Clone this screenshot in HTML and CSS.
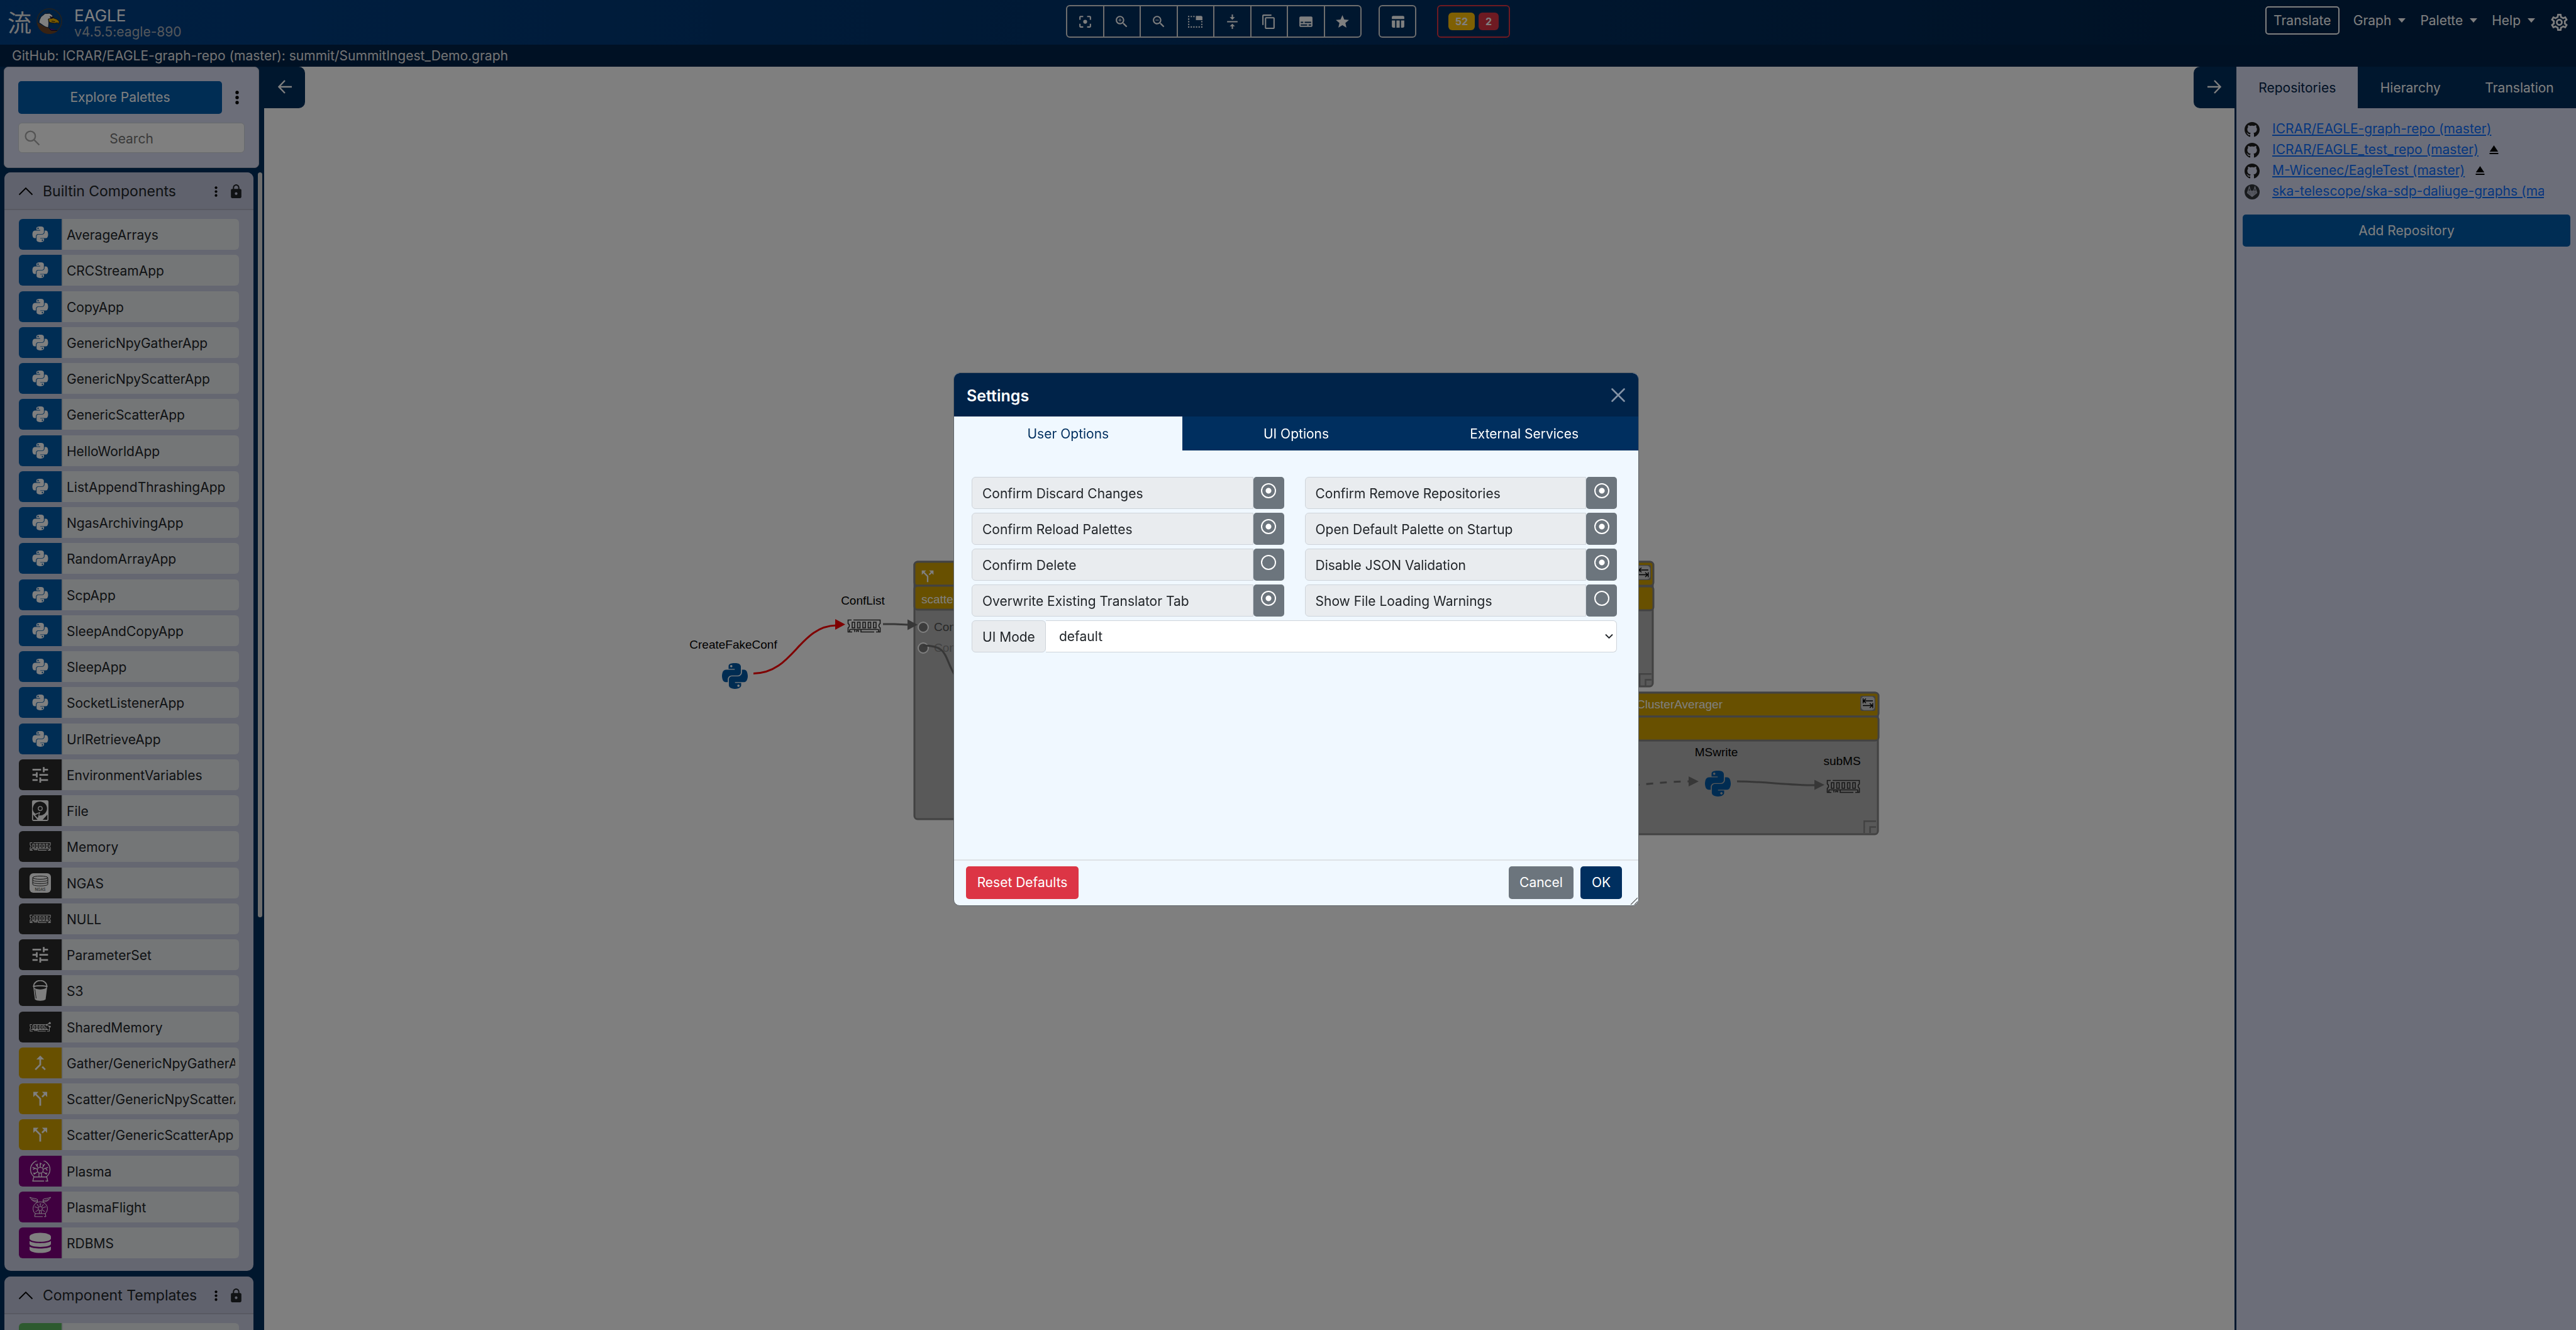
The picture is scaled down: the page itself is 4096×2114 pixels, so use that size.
FILE: index.html
```html
<!DOCTYPE html>
<html lang="en">
<head>
<meta charset="utf-8">
<title>EAGLE</title>
<link rel="stylesheet" href="styles.css">
</head>
<body>

<svg class="sprite" aria-hidden="true">
  <symbol id="i-python" viewBox="0 32 448 448"><path d="M439.8 200.5c-7.7-30.9-22.3-54.2-53.4-54.2h-40.1v47.4c0 36.8-31.2 67.8-66.8 67.8H172.7c-29.2 0-53.4 25-53.4 54.3v101.8c0 29 25.2 46 53.4 54.3 33.8 9.9 66.3 11.7 106.8 0 26.9-7.8 53.4-23.5 53.4-54.3v-40.7H226.2v-13.6h160.2c31.1 0 42.6-21.7 53.4-54.2 11.2-33.5 10.7-65.7 0-108.6zM286.2 404c11.1 0 20.1 9.1 20.1 20.3 0 11.3-9 20.4-20.1 20.4-11 0-20.1-9.2-20.1-20.4.1-11.3 9.1-20.3 20.1-20.3zM167.8 248.1h106.8c29.7 0 53.4-24.5 53.4-54.3V91.9c0-29-24.4-50.7-53.4-55.6-35.8-5.9-74.7-5.6-106.8.1-45.2 8-53.4 24.7-53.4 55.6v40.7h106.9v13.6h-147c-31.1 0-58.3 18.7-66.8 54.2-9.8 40.7-10.2 66.1 0 108.6 7.6 31.6 25.7 54.2 56.8 54.2H101v-48.8c0-35.3 30.5-66.4 66.8-66.4zm-6.7-142.6c-11.1 0-20.1-9.1-20.1-20.3.1-11.3 9-20.4 20.1-20.4 11 0 20.1 9.2 20.1 20.4s-9 20.3-20.1 20.3z"/></symbol>
  <symbol id="i-tune" viewBox="0 0 24 24"><path d="M3 17v2h6v-2H3zM3 5v2h10V5H3zm10 16v-2h8v-2h-8v-2h-2v6h2zM7 9v2H3v2h4v2h2V9H7zm14 4v-2H11v2h10zm-6-4h2V7h4V5h-4V3h-2v6z"/></symbol>
  <symbol id="i-split" viewBox="0 0 24 24"><path d="M14 4l2.29 2.29-2.88 2.88 1.42 1.42 2.88-2.88L20 10V4zm-4 0H4v6l2.29-2.29 4.71 4.7V20h2v-8.41l-5.29-5.3z"/></symbol>
  <symbol id="i-merge" viewBox="0 0 24 24"><path d="M17 20.41 18.41 19 15 15.59 13.59 17 17 20.41zM7.5 8H11v5.59L5.59 19 7 20.41l6-6V8h3.5L12 3.5 7.5 8z"/></symbol>
  <symbol id="i-memory" viewBox="0 0 54 22">
    <g fill="none" stroke="currentColor" stroke-width="1.6">
      <path d="M7 1.5H1.5V7a4 4 0 0 1 0 7V20.500H8M10 1.500H52.500V7a4 4 0 0 0 0 7V20.500H46M4 16.500H50M4 16.500V20M12 20.500V17M15 20.500V18.500H18V20.500M22 17V20.500H43M50 16.500V20"/>
      <path d="M8 5h4v9h-4zM16.500 5h4v9h-4zM25 5h4v9h-4zM33.500 5h4v9h-4zM42 5h4v9h-4z"/>
    </g>
  </symbol>
  <symbol id="i-shared" viewBox="0 0 54 26">
    <g fill="none" stroke="currentColor" stroke-width="1.6">
      <path d="M6 6.500H1.500V11a4 4 0 0 1 0 6V23.500H8M9 6.500H40M50 15V23.500H44M4 19.500H48M12 23.500V20M15 23.500V21.500H18V23.500M21 20V23.500H41M43 7.500 51 3M43 7.500 51 12"/>
      <path d="M8 9.500h4v8h-4zM16.500 9.500h4v8h-4zM25 9.500h4v8h-4zM33 9.500h4v8h-4zM41 12V17.500H45"/>
    </g>
    <circle cx="42.500" cy="7.500" r="2.200"/><circle cx="51" cy="3" r="2.600"/><circle cx="51" cy="12" r="2.600"/>
  </symbol>
  <symbol id="i-file" viewBox="0 0 27 34">
    <path fill-rule="evenodd" d="M2.500 0H24.500A2.500 2.500 0 0 1 27 2.500V31.500A2.500 2.500 0 0 1 24.500 34H2.500A2.500 2.500 0 0 1 0 31.500V2.500A2.500 2.500 0 0 1 2.500 0ZM13.500 2A12 11.500 0 0 0 5.500 22.200L13.500 19 11.500 25A12 11.500 0 1 0 13.500 2ZM13.500 9.500A4 4 0 1 1 13.500 17.500A4 4 0 1 1 13.500 9.500ZM1.800 23.500V32H9ZM25.200 23.500V32H17.500ZM11.500 21 5 24.500 9.500 29Z"/>
    <circle cx="13.500" cy="13.500" r="2.600" fill="#2a2a2a"/>
  </symbol>
  <symbol id="i-ngas" viewBox="0 0 34 31">
    <rect width="34" height="31" rx="6"/>
    <g fill="none" stroke="#2a2a2a" stroke-width="1"><ellipse cx="17" cy="7" rx="12" ry="2.500"/><path d="M5 7V17.500C5 21 29 21 29 17.500V7M5 10.500C5 14 29 14 29 10.500M5 14C5 17.500 29 17.500 29 14"/></g>
    <text x="17" y="28" font-family="Inter, sans-serif" font-size="6" text-anchor="middle" fill="#2a2a2a">NGAS</text>
  </symbol>
  <symbol id="i-bucket" viewBox="0 0 24 33">
    <path d="M1.500 10C2 -2.500 22 -2.500 22.500 10" fill="none" stroke="currentColor" stroke-width="1.800"/>
    <path d="M0 9.500C3 7.500 21 7.500 24 9.500L23 11 20.500 30.500C17 33.500 7 33.500 3.500 30.500L1 11Z"/>
    <path d="M2.500 11.500C6 9.800 18 9.800 21.500 11.500 18 15 6 15 2.500 11.500ZM3.500 14.500 5.500 29" fill="#2a2a2a" stroke="#2a2a2a" stroke-width="1"/>
  </symbol>
  <symbol id="i-plasma" viewBox="0 0 32 32">
    <g fill="none" stroke="currentColor" stroke-width="1.300">
      <path d="M7 25A15 14.500 0 1 1 25 25M6 25H26L27.500 31.300H24M22 31.300H4.500L6 25"/>
      <circle cx="16" cy="14.500" r="4.500"/>
      <path d="M14 19V25M18 19V25M16 10V3M16 6 18 4M12.500 10.500 9 5M11 8.500 12 4.500M19.500 10.500 23 5M21 8.500 20 5.500M11.500 13 4 10M8 11.500 5 13.500M20.500 13 28 10M24 11.500 27 15M12 17 6 21M9.500 19H5M20 17 26 21M22.500 19H27"/>
    </g>
  </symbol>
  <symbol id="i-flight" viewBox="0 0 34 32">
    <g fill="none" stroke="currentColor" stroke-width="1">
      <path d="M9.500 27A11.500 11 0 1 1 24.500 27M9 26.500H25L26 31.300H23M21 31.300H8L9 26.500"/>
      <circle cx="17" cy="18.500" r="3.300"/>
      <path d="M15.500 22V26.500M18.500 22V26.500M17 15V10M17 12 18.500 10.500M14.500 15.500 12 11.500M19.500 15.500 22 11.500M13.500 17.500 8 15.500M20.500 17.500 26 15.500M14 20.500 9.500 23.500M20 20.500 24.500 23.500"/>
      <path d="M12.500 8.500V4C10 2 5 3 .500.500 2 4 4 4.500 12.500 6.500M3 4C5 7 8 7 12 8.500M21.500 8.500V4C24 2 29 3 33.500.500 32 4 30 4.500 21.500 6.500M31 4C29 7 26 7 22 8.500"/>
    </g>
  </symbol>
  <symbol id="i-database" viewBox="0 0 34 32"><path d="M17 0C27 0 34 3 34 6V9C34 16 0 16 0 9V6C0 3 7 0 17 0ZM0 13C5 17.500 29 17.500 34 13V17.500C34 24 0 24 0 17.500ZM0 22C5 26 29 26 34 22V26C34 34 0 34 0 26Z"/></symbol>
  <symbol id="i-lock" viewBox="0 0 24 24"><path d="M18 8h-1V6c0-2.760-2.240-5-5-5S7 3.240 7 6v2H6c-1.100 0-2 .900-2 2v10c0 1.100.900 2 2 2h12c1.100 0 2-.900 2-2V10c0-1.100-.900-2-2-2zm-6 9c-1.100 0-2-.900-2-2s.900-2 2-2 2 .900 2 2-.900 2-2 2zm3.100-9H8.900V6c0-1.710 1.390-3.100 3.100-3.100 1.710 0 3.100 1.390 3.100 3.100v2z"/></symbol>
  <symbol id="i-dots" viewBox="0 0 6 22"><circle cx="3" cy="3" r="2.700"/><circle cx="3" cy="11" r="2.700"/><circle cx="3" cy="19" r="2.700"/></symbol>
  <symbol id="i-chevron" viewBox="0 0 24 14"><path d="M1.500 12.500 12 2 22.500 12.500" fill="none" stroke="currentColor" stroke-width="1.800"/></symbol>
  <symbol id="i-arrow-left" viewBox="0 0 22 22"><path d="M22 11H2M11 1 1.500 11 11 21" fill="none" stroke="currentColor" stroke-width="2.400"/></symbol>
  <symbol id="i-arrow-right" viewBox="0 0 22 22"><path d="M0 11H20M11 1 20.500 11 11 21" fill="none" stroke="currentColor" stroke-width="2.400"/></symbol>
  <symbol id="i-github" viewBox="0 0 16 16"><path d="M8 0C3.580 0 0 3.580 0 8c0 3.540 2.290 6.530 5.470 7.590.4.070.55-.170.55-.380 0-.190-.010-.820-.010-1.490-2.010.370-2.530-.490-2.690-.940-.090-.230-.480-.940-.820-1.130-.280-.150-.680-.520-.010-.530.630-.010 1.080.580 1.230.820.720 1.210 1.870.870 2.330.660.070-.520.280-.870.510-1.070-1.780-.2-3.640-.890-3.640-3.950 0-.870.310-1.590.820-2.150-.080-.2-.360-1.020.080-2.120 0 0 .670-.210 2.200.820.640-.180 1.320-.270 2-.270s1.360.090 2 .270c1.530-1.040 2.200-.820 2.200-.820.440 1.100.160 1.920.080 2.120.510.560.820 1.270.820 2.150 0 3.070-1.870 3.750-3.650 3.950.290.250.540.730.540 1.480 0 1.070-.010 1.930-.010 2.200 0 .210.150.460.550.380A8.010 8.010 0 0 0 16 8c0-4.420-3.580-8-8-8z"/></symbol>
  <symbol id="i-gitlab" viewBox="0 0 24 24"><circle cx="12" cy="12" r="12" fill="#32373c"/><path d="M7.500 4 4.500 13.500 12 19.500 19.500 13.500 16.500 4 14.500 10.500H9.500Z" fill="none" stroke="#b8bccd" stroke-width="1.200"/><path d="M9.500 10.500 12 19 14.500 10.500M5.500 10.500H9.500L12 19 5 12.500ZM18.500 10.500H14.500L12 19 19 12.500Z" fill="#9a9eae" stroke="#b8bccd" stroke-width=".8"/></symbol>
  <symbol id="i-eject" viewBox="5 5 14 14"><path d="M5 17h14v2H5zM12 5 5.330 15h13.340z"/></symbol>
  <symbol id="i-expand" viewBox="0 0 24 24"><rect width="24" height="24" rx="6" fill="#d0d0d0" stroke="#848484" stroke-width="2.600"/><path d="M20 8H5M9 4.500 5 8 9 11.500M4.500 4V12M4 15.500H19M15 12 19 15.500 15 19M19.800 11.500V19.500" fill="none" stroke="#000" stroke-width="1.400"/></symbol>
  <symbol id="i-resize" viewBox="0 0 20 20"><path d="M1.200 20V1.200H20M10.500 20V10.500H20" fill="none" stroke="#848484" stroke-width="2.400"/></symbol>
</svg>

<header class="navbar">
  <div class="brand">
    <span class="brand-glyph" lang="ja">流</span>
    <svg class="brand-eagle" viewBox="0 0 41 41">
      <circle cx="20.500" cy="20.500" r="19.500" fill="#004080" stroke="#46423c" stroke-width="1.600"/>
      <path d="M1.500 22.500C2 34 10 41 20.500 41 27 41 31.500 38.500 34 35.500H23.500L20 31.800 11 28.800Z" fill="#6e4426"/>
      <path d="M4 22.800 5 18.300 7.300 13.700 13.500 8.700 21 8.200 25.600 11.800 26 16 19 17.300 19.500 24 18.800 31 14 29.500 10.800 27.500Z" fill="#fff" stroke="#10101a" stroke-width=".8"/>
      <path d="M18.800 17.200 26.800 15.600 32 17.500 36 20.600 35.500 25.200 33.200 22.900 29 24 20.500 22.500Z" fill="#f0b400" stroke="#10101a" stroke-width=".8"/>
      <path d="M21.500 13.500 26 14.500 25 16 22.500 15.500ZM24 20.500 29.500 21.500M20 31.800 23.500 35.500H33" fill="#5a1090" stroke="#10101a" stroke-width="1"/>
    </svg>
    <div class="brand-text">
      <span class="brand-name">EAGLE</span>
      <span class="brand-version">v4.5.5:eagle-890</span>
    </div>
  </div>

  <div class="toolbar">
    <div class="tool-group">
      <button class="tool" aria-label="Center graph"><svg viewBox="0 0 24 24"><path d="M5 15H3v4c0 1.100.9 2 2 2h4v-2H5v-4zM5 5h4V3H5c-1.100 0-2 .900-2 2v4h2V5zm14-2h-4v2h4v4h2V5c0-1.100-.900-2-2-2zm0 16h-4v2h4c1.100 0 2-.900 2-2v-4h-2v4zM12 9a3 3 0 1 0 0 6 3 3 0 0 0 0-6z"/></svg></button>
      <button class="tool" aria-label="Zoom in"><svg viewBox="0 0 24 24"><path d="M15.500 14h-.790l-.280-.270C15.410 12.590 16 11.110 16 9.500 16 5.910 13.090 3 9.500 3S3 5.910 3 9.500 5.910 16 9.500 16c1.610 0 3.090-.590 4.230-1.570l.270.280v.790l5 4.990L20.490 19l-4.990-5zm-6 0C7.010 14 5 11.990 5 9.500S7.010 5 9.500 5 14 7.010 14 9.500 11.990 14 9.500 14zM12 10h-2v2H9v-2H7V9h2V7h1v2h2z"/></svg></button>
      <button class="tool" aria-label="Zoom out"><svg viewBox="0 0 24 24"><path d="M15.500 14h-.790l-.280-.270C15.410 12.590 16 11.110 16 9.500 16 5.910 13.090 3 9.500 3S3 5.910 3 9.500 5.910 16 9.500 16c1.610 0 3.090-.590 4.230-1.570l.270.280v.790l5 4.990L20.490 19l-4.990-5zm-6 0C7.010 14 5 11.990 5 9.500S7.010 5 9.500 5 14 7.010 14 9.500 11.990 14 9.500 14zM7 9h5v1H7z"/></svg></button>
      <button class="tool" aria-label="Toggle collapse"><svg viewBox="0 0 24 24"><path d="M13 3h8c1 0 2 1 2 2v4.500H13zM1 3h2v2H1zM5 3h2v2H5zM9 3h2v2H9zM1 7h2v2H1zM1 11h2v2H1zM1 15h2v2H1zM1 19h2v2H1zM5 19h2v2H5zM9 19h2v2H9zM13 19h2v2h-2zM17 19h2v2h-2zM21 19h2v2h-2zM21 15h2v2h-2zM21 11h2v2h-2z"/></svg></button>
      <button class="tool" aria-label="Align"><svg viewBox="0 0 24 24"><path d="M8 19h3v4h2v-4h3l-4-4-4 4zm8-14h-3V1h-2v4H8l4 4 4-4zM4 11v2h16v-2H4z"/></svg></button>
      <button class="tool" aria-label="Copy"><svg viewBox="0 0 24 24"><path d="M16 1H4c-1.100 0-2 .900-2 2v14h2V3h12V1zm3 4H8c-1.100 0-2 .900-2 2v14c0 1.100.900 2 2 2h11c1.100 0 2-.900 2-2V7c0-1.100-.900-2-2-2zm0 16H8V7h11v14z"/></svg></button>
      <button class="tool" aria-label="Descriptions"><svg viewBox="0 0 24 24"><path d="M20 4H4c-1.100 0-2 .900-2 2v12c0 1.100.900 2 2 2h16c1.100 0 2-.900 2-2V6c0-1.100-.900-2-2-2zM4 12h4v2H4v-2zm10 6H4v-2h10v2zm6 0h-4v-2h4v2zm0-4H10v-2h10v2z"/></svg></button>
      <button class="tool" aria-label="Favourites"><svg viewBox="0 0 24 24"><path d="M12 17.270 18.180 21l-1.640-7.030L22 9.240l-7.190-.610L12 2 9.190 8.630 2 9.240l5.460 4.730L5.820 21z"/></svg></button>
    </div>
    <button class="tool tool-single" aria-label="Table"><svg viewBox="0 0 24 24"><path d="M10 10.020h5V21h-5V10.020zM17 21h3c1.100 0 2-.900 2-2v-9h-5v11zm3-18H5c-1.100 0-2 .900-2 2v3h19V5c0-1.100-.900-2-2-2zM3 19c0 1.100.900 2 2 2h3V10H3v9z"/></svg></button>
    <button class="issues"><span class="badge badge-warning">52</span><span class="badge badge-danger">2</span></button>
  </div>

  <nav class="menu">
    <button class="translate">Translate</button>
    <button class="menu-item">Graph<span class="caret"></span></button>
    <button class="menu-item">Palette<span class="caret"></span></button>
    <button class="menu-item">Help<span class="caret"></span></button>
    <button class="gear" aria-label="Settings"><svg viewBox="2 2 20 20"><path d="M19.430 12.980c.040-.320.070-.640.070-.980s-.030-.660-.070-.980l2.110-1.650c.190-.150.240-.420.120-.640l-2-3.460c-.090-.160-.260-.250-.440-.250-.060 0-.120.010-.170.030l-2.490 1c-.520-.4-1.080-.730-1.690-.980l-.380-2.650C14.460 2.180 14.250 2 14 2h-4c-.250 0-.460.180-.490.420l-.380 2.650c-.610.250-1.170.590-1.690.980l-2.490-1c-.060-.020-.120-.030-.180-.030-.170 0-.340.090-.430.250l-2 3.460c-.130.220-.070.490.120.640l2.110 1.650c-.040.320-.070.650-.070.980s.030.660.070.980l-2.110 1.650c-.190.150-.240.420-.120.640l2 3.460c.090.160.260.250.440.250.060 0 .120-.010.170-.030l2.490-1c.520.400 1.080.730 1.690.980l.380 2.650c.030.240.240.420.490.420h4c.250 0 .460-.180.490-.420l.380-2.650c.610-.250 1.170-.590 1.690-.980l2.490 1c.060.020.120.030.180.030.170 0 .340-.090.430-.250l2-3.460c.120-.220.070-.490-.120-.640l-2.110-1.650zm-1.980-1.710c.040.310.050.520.050.730 0 .210-.020.430-.050.730l-.140 1.130.890.700 1.080.840-.700 1.210-1.270-.510-1.040-.420-.900.680c-.430.320-.840.560-1.250.730l-1.060.430-.160 1.130-.200 1.350h-1.400l-.190-1.350-.160-1.130-1.060-.430c-.430-.180-.830-.410-1.230-.710l-.910-.700-1.060.430-1.270.510-.700-1.210 1.080-.840.890-.700-.140-1.130c-.030-.310-.050-.540-.050-.740s.020-.430.050-.730l.140-1.130-.890-.700-1.080-.840.700-1.210 1.270.510 1.040.420.900-.680c.430-.320.840-.560 1.250-.730l1.060-.430.160-1.130.200-1.350h1.390l.190 1.350.160 1.130 1.060.430c.430.180.830.410 1.230.710l.910.700 1.060-.430 1.270-.510.700 1.210-1.070.850-.890.700.140 1.130zM12 8c-2.210 0-4 1.790-4 4s1.790 4 4 4 4-1.790 4-4-1.790-4-4-4zm0 6c-1.100 0-2-.900-2-2s.900-2 2-2 2 .900 2 2-.900 2-2 2z"/></svg></button>
  </nav>
</header>

<div class="filebar">GitHub: ICRAR/EAGLE-graph-repo (master): summit/SummitIngest_Demo.graph</div>

<main class="workspace">
  <aside class="palettes">
    <section class="palette-tools">
      <div class="palette-actions">
        <button class="btn-blue explore">Explore Palettes</button>
        <button class="more" aria-label="More"><svg><use href="#i-dots"/></svg></button>
      </div>
      <div class="search">
        <svg class="search-icon" viewBox="0 0 24 24"><path d="M9 1.500a7.500 7.500 0 1 1 0 15 7.500 7.500 0 0 1 0-15zM14.500 14.500 22.500 22.500" fill="none" stroke="currentColor" stroke-width="2.200"/></svg>
        <input type="text" placeholder="Search" aria-label="Search">
      </div>
    </section>

    <div class="palette-scroll">
      <div class="palette-stack">
        <section class="palette">
          <h2 class="palette-head"><svg class="chevron"><use href="#i-chevron"/></svg><span>Builtin Components</span><svg class="head-dots"><use href="#i-dots"/></svg><svg class="head-lock"><use href="#i-lock"/></svg></h2>
          <ul class="components components-full">
            <li class="app"><svg class="ic"><use href="#i-python"/></svg><span>AverageArrays</span></li>
            <li class="app"><svg class="ic"><use href="#i-python"/></svg><span>CRCStreamApp</span></li>
            <li class="app"><svg class="ic"><use href="#i-python"/></svg><span>CopyApp</span></li>
            <li class="app"><svg class="ic"><use href="#i-python"/></svg><span>GenericNpyGatherApp</span></li>
            <li class="app"><svg class="ic"><use href="#i-python"/></svg><span>GenericNpyScatterApp</span></li>
            <li class="app"><svg class="ic"><use href="#i-python"/></svg><span>GenericScatterApp</span></li>
            <li class="app"><svg class="ic"><use href="#i-python"/></svg><span>HelloWorldApp</span></li>
            <li class="app"><svg class="ic"><use href="#i-python"/></svg><span>ListAppendThrashingApp</span></li>
            <li class="app"><svg class="ic"><use href="#i-python"/></svg><span>NgasArchivingApp</span></li>
            <li class="app"><svg class="ic"><use href="#i-python"/></svg><span>RandomArrayApp</span></li>
            <li class="app"><svg class="ic"><use href="#i-python"/></svg><span>ScpApp</span></li>
            <li class="app"><svg class="ic"><use href="#i-python"/></svg><span>SleepAndCopyApp</span></li>
            <li class="app"><svg class="ic"><use href="#i-python"/></svg><span>SleepApp</span></li>
            <li class="app"><svg class="ic"><use href="#i-python"/></svg><span>SocketListenerApp</span></li>
            <li class="app"><svg class="ic"><use href="#i-python"/></svg><span>UrlRetrieveApp</span></li>
            <li class="data"><svg class="ic wide"><use href="#i-tune"/></svg><span>EnvironmentVariables</span></li>
            <li class="data"><svg class="ic wide"><use href="#i-file"/></svg><span>File</span></li>
            <li class="data"><svg class="ic wide"><use href="#i-memory"/></svg><span>Memory</span></li>
            <li class="data"><svg class="ic wide"><use href="#i-ngas"/></svg><span>NGAS</span></li>
            <li class="data"><svg class="ic wide"><use href="#i-memory"/></svg><span>NULL</span></li>
            <li class="data"><svg class="ic wide"><use href="#i-tune"/></svg><span>ParameterSet</span></li>
            <li class="data"><svg class="ic wide"><use href="#i-bucket"/></svg><span>S3</span></li>
            <li class="data"><svg class="ic wide"><use href="#i-shared"/></svg><span>SharedMemory</span></li>
            <li class="construct"><svg class="ic wide"><use href="#i-merge"/></svg><span>Gather/GenericNpyGatherApp</span></li>
            <li class="construct"><svg class="ic wide"><use href="#i-split"/></svg><span>Scatter/GenericNpyScatterApp</span></li>
            <li class="construct"><svg class="ic wide"><use href="#i-split"/></svg><span>Scatter/GenericScatterApp</span></li>
            <li class="service"><svg class="ic wide"><use href="#i-plasma"/></svg><span>Plasma</span></li>
            <li class="service"><svg class="ic wide"><use href="#i-flight"/></svg><span>PlasmaFlight</span></li>
            <li class="service"><svg class="ic wide"><use href="#i-database"/></svg><span>RDBMS</span></li>
          </ul>
        </section>
        <section class="palette">
          <h2 class="palette-head"><svg class="chevron"><use href="#i-chevron"/></svg><span>Component Templates</span><svg class="head-dots"><use href="#i-dots"/></svg><svg class="head-lock"><use href="#i-lock"/></svg></h2>
          <ul class="components">
            <li class="note"><svg class="ic"></svg><span></span></li>
          </ul>
        </section>
      </div>
      <div class="scroll-thumb"></div>
    </div>
  </aside>

  <section class="canvas">
    <svg class="graph" viewBox="420 106 3133 2008" preserveAspectRatio="xMinYMin meet">
      <g class="frame">
        <rect x="1454" y="893" width="600" height="409" rx="5"/>
        <rect class="bar" x="1454" y="893" width="600" height="38" rx="5"/>
        <rect class="bar" x="1454" y="931" width="600" height="38" rx="5"/>
        <rect x="2300" y="893" width="328" height="198" rx="5"/>
        <rect class="bar" x="2300" y="893" width="329" height="38" rx="5"/>
        <rect class="bar" x="2300" y="932" width="329" height="38" rx="5"/>
        <rect x="2400" y="1101" width="586" height="225" rx="5"/>
        <rect class="bar" x="2400" y="1101" width="587" height="38" rx="5"/>
        <rect class="bar" x="2400" y="1139" width="587" height="38" rx="5"/>
      </g>
      <use href="#i-split" x="1461" y="902" width="28" height="28" class="light"/>
      <text x="1465" y="959" class="light">scatter</text>
      <text x="2739" y="1126" class="light" text-anchor="end">ClusterAverager</text>
      <use href="#i-expand" x="2601" y="898" width="24" height="24" overflow="visible"/>
      <use href="#i-expand" x="2958" y="1106" width="24" height="24" overflow="visible"/>
      <use href="#i-resize" x="2606" y="1070" width="20" height="20"/>
      <use href="#i-resize" x="2963" y="1304" width="20" height="20"/>

      <g class="port"><circle cx="1468" cy="997" r="8"/><circle cx="1468" cy="1030" r="8"/></g>
      <text x="1485" y="1003" fill="#505050">ConfList</text>
      <text x="1485" y="1036" fill="#848484">ConfList</text>

      <path class="edge edge-red" d="M1198 1070.500C1262 1070 1270 995 1330 994"/>
      <path class="tip-red" d="M1328 984V1001L1344 992.500Z"/>
      <path class="edge" d="M1404 992H1422L1444 993M1468 1026C1510 1026 1500 1046 1520 1076M2762 1242C2805 1242 2840 1248 2886 1248"/>
      <path class="edge dashed" d="M2595.700 1248.500C2630 1245 2650 1242.500 2686 1242"/>
      <path class="tip" d="M1443 984.500V1001.500L1459 993ZM2685 1234V1250L2701 1242ZM2885 1239.500V1255.500L2901 1247.500Z"/>

      <use href="#i-python" x="1148" y="1054" width="41" height="41" fill="#0059a5"/>
      <use href="#i-python" x="2711" y="1225" width="41" height="41" fill="#0059a5"/>
      <use href="#i-memory" x="1347" y="984" width="54" height="22" color="#303030"/>
      <use href="#i-memory" x="2904" y="1239" width="54" height="22" color="#303030"/>
      <g text-anchor="middle">
        <text x="1166" y="1031">CreateFakeConf</text>
        <text x="1372" y="961">ConfList</text>
        <text x="2729" y="1202">MSwrite</text>
        <text x="2929" y="1216">subMS</text>
      </g>
    </svg>
    <button class="drawer drawer-left" aria-label="Hide palettes"><svg><use href="#i-arrow-left"/></svg></button>
    <button class="drawer drawer-right" aria-label="Hide repositories"><svg><use href="#i-arrow-right"/></svg></button>
  </section>

  <aside class="inspector">
    <div class="tabs">
      <button class="tab tab-active">Repositories</button>
      <button class="tab">Hierarchy</button>
      <button class="tab">Translation</button>
    </div>
    <ul class="repos">
      <li><svg class="host"><use href="#i-github"/></svg><a href="#">ICRAR/EAGLE-graph-repo (master)</a></li>
      <li><svg class="host"><use href="#i-github"/></svg><a href="#">ICRAR/EAGLE_test_repo (master)</a><svg class="eject"><use href="#i-eject"/></svg></li>
      <li><svg class="host"><use href="#i-github"/></svg><a href="#">M-Wicenec/EagleTest (master)</a><svg class="eject"><use href="#i-eject"/></svg></li>
      <li><svg class="host"><use href="#i-gitlab"/></svg><a href="#">ska-telescope/ska-sdp-daliuge-graphs (main)</a></li>
    </ul>
    <button class="btn-blue add-repo">Add Repository</button>
  </aside>
</main>

<div class="backdrop">
  <div class="dialog" role="dialog" aria-labelledby="dialog-title">
    <div class="dialog-head">
      <h1 id="dialog-title">Settings</h1>
      <button class="close" aria-label="Close"><svg viewBox="0 0 22 22"><path d="M1.500 1.500 20.500 20.500M20.500 1.500 1.500 20.500" fill="none" stroke="currentColor" stroke-width="2.600" stroke-linecap="round"/></svg></button>
    </div>
    <div class="dialog-tabs">
      <button class="dialog-tab dialog-tab-active">User Options</button>
      <button class="dialog-tab">UI Options</button>
      <button class="dialog-tab">External Services</button>
    </div>
    <div class="dialog-body">
      <div class="option"><label for="o1">Confirm Discard Changes</label><input type="checkbox" id="o1" checked></div>
      <div class="option"><label for="o2">Confirm Remove Repositories</label><input type="checkbox" id="o2" checked></div>
      <div class="option"><label for="o3">Confirm Reload Palettes</label><input type="checkbox" id="o3" checked></div>
      <div class="option"><label for="o4">Open Default Palette on Startup</label><input type="checkbox" id="o4" checked></div>
      <div class="option"><label for="o5">Confirm Delete</label><input type="checkbox" id="o5"></div>
      <div class="option"><label for="o6">Disable JSON Validation</label><input type="checkbox" id="o6" checked></div>
      <div class="option"><label for="o7">Overwrite Existing Translator Tab</label><input type="checkbox" id="o7" checked></div>
      <div class="option"><label for="o8">Show File Loading Warnings</label><input type="checkbox" id="o8"></div>
      <div class="option option-wide"><label for="mode">UI Mode</label><select id="mode"><option>default</option></select></div>
    </div>
    <div class="dialog-foot">
      <button class="btn btn-danger">Reset Defaults</button>
      <button class="btn btn-grey">Cancel</button>
      <button class="btn btn-navy">OK</button>
    </div>
    <svg class="grip" viewBox="0 0 12 12"><path d="M1 12 12 1M7 12 12 7" fill="none" stroke="#555" stroke-width="1.200"/></svg>
  </div>
</div>

</body>
</html>
```
FILE: styles.css
```css
* { box-sizing: border-box; }

body {
  margin: 0;
  height: 100vh;
  display: flex;
  flex-direction: column;
  overflow: hidden;
  background: #fff;
  color: #212529;
  font: 21px/32px Inter, "Noto Sans CJK JP", sans-serif;
}

button, input, select {
  font: inherit;
  color: inherit;
  margin: 0;
  padding: 0;
  border: 0;
  background: none;
}

ul { list-style: none; margin: 0; padding: 0; }
svg { display: block; fill: currentColor; flex: none; }
.sprite { position: absolute; width: 0; height: 0; }

/* top bar */
.navbar {
  flex: none;
  height: 71px;
  display: grid;
  grid-template-columns: 1fr auto 1fr;
  align-items: start;
  color: #fff;
  background: linear-gradient(to right, #004086, #002349 90%);
}
.brand { display: flex; padding-left: 12px; }
.brand-glyph { font-family: "Noto Sans CJK JP", sans-serif; font-size: 38px; line-height: 60px; margin-top: 4px; width: 39px; color: #e8e8e8; }
.brand-eagle { width: 41px; height: 41px; margin: 13px 0 0 7px; }
.brand-text { display: flex; flex-direction: column; margin-left: 19px; padding-top: 9px; }
.brand-name { font-size: 26px; line-height: 31px; }
.brand-version { line-height: 22px; color: #aab0b8; }

.toolbar { display: flex; margin-top: 8px; }
.tool-group {
  display: flex;
  width: 470px;
  height: 52px;
  border: 2px solid #dcdcdc;
  border-radius: 6px;
}
.tool { flex: 1; display: grid; place-items: center; background: #002e5e; }
.tool:first-child { border-radius: 6px 0 0 6px; }
.tool:last-child { border-radius: 0 6px 6px 0; }
.tool + .tool { border-left: 2px solid #dcdcdc; }
.tool svg { width: 25px; height: 25px; }
.tool-group + .tool-single {
  flex: none;
  width: 60px;
  height: 52px;
  margin-left: 27px;
  border: 2px solid #dcdcdc;
  border-radius: 6px;
}
.issues {
  display: flex;
  align-items: center;
  justify-content: center;
  gap: 6px;
  width: 116px;
  height: 52px;
  margin-left: 33px;
  border: 2px solid #dc3545;
  border-radius: 6px;
  background: #002e5e;
}
.badge {
  padding: 0 11px;
  border-radius: 6px;
  font-size: 16px;
  font-weight: 700;
  line-height: 28px;
}
.badge-warning { background: #ffc107; }
.badge-danger { background: #dc3545; }

.menu { display: flex; justify-content: flex-end; align-items: center; padding: 10px 13px 0 0; }
.translate { width: 118px; height: 45px; border: 2px solid #fff; border-radius: 5px; margin-right: 22px; }
.menu-item { display: flex; align-items: center; margin-right: 23px; }
.caret { margin-left: 11px; border: 6px solid transparent; border-top: 7px solid #fff; border-bottom: 0; }
.gear svg { width: 27px; height: 27px; margin-left: 2px; margin-top: 6px; }

.filebar {
  flex: none;
  height: 35px;
  padding-left: 19px;
  line-height: 35px;
  color: #e6e6e6;
  background: #002349;
}

/* workspace */
.workspace { flex: 1; min-height: 0; display: flex; }

.palettes {
  flex: none;
  width: 420px;
  display: flex;
  flex-direction: column;
  background: #002e5c;
  overflow: hidden;
}
.palette-tools {
  margin: 0 8px 0 6px;
  padding: 22px 22px 23px;
  border: 1px solid #b6b9c8;
  border-radius: 7px;
  background: #d8dcf2;
}
.btn-blue { display: block; height: 52px; border-radius: 5px; background: #005aa8; color: #fff; }
.palette-actions { display: flex; }
.explore { width: 324px; }
.more { padding-left: 21px; color: #000; }
.more svg { width: 6px; height: 22px; }
.search { position: relative; margin-top: 14px; }
.search input {
  display: block;
  width: 100%;
  height: 48px;
  padding-top: 2px;
  border: 1px solid #ced4da;
  border-radius: 6px;
  background: #fff;
  text-align: center;
}
.search input::placeholder { color: #757575; opacity: 1; }
.search-icon { position: absolute; left: 10px; top: 12px; width: 25px; height: 25px; color: #a8a8a8; }

.palette-scroll { display: flex; padding: 7px 3px 0 7px; min-height: 0; }
.palette-stack { width: 396px; flex: none; }
.scroll-thumb { flex: none; width: 7px; height: 1184px; margin-left: 7px; border-radius: 4px; background: #dadada; }
.palette { margin-bottom: 9px; border-radius: 10px; background: #cacee2; overflow: hidden; }
.palette-head {
  display: flex;
  align-items: center;
  height: 60px;
  margin: 0;
  padding: 2px 15px 0 22px;
  border-bottom: 2px solid #b0b3c4;
  background: #c0c4da;
  font-size: 23px;
  font-weight: 400;
}
.palette-head span { flex: 1; padding-left: 15px; white-space: nowrap; }
.chevron { width: 24px; height: 14px; color: #000; }
.head-dots { width: 5px; height: 17px; color: #000; }
.head-lock { width: 25px; height: 25px; margin-left: 17px; }

.components { padding: 14px 23px 20px; display: grid; align-content: space-between; }
.components-full { height: 1686px; }
.components li {
  display: grid;
  grid-template-columns: 68px 1fr;
  height: 49px;
  border-radius: 6px;
  background: #e9ecef;
  overflow: hidden;
}
.components span {
  margin-right: 6px;
  padding-left: 6px;
  border-left: 2px solid #ced4da;
  line-height: 51px;
  white-space: nowrap;
  overflow: hidden;
}
.components .ic { width: 68px; height: 49px; padding: 12px 0; background: var(--kind); color: #fff; }
.components .wide { padding: 8px 17px; }
.app { --kind: #005aa8; }
.data { --kind: #2a2a2a; }
.construct { --kind: #d0a000; }
.service { --kind: #800080; }
.note { --kind: #5ab45e; }

.canvas { flex: 1; position: relative; background: #fff; overflow: hidden; }
.graph { width: 100%; height: 100%; font: 19px "Liberation Sans", sans-serif; fill: #000; }
.frame rect { fill: #b2b2b2; stroke: #848484; stroke-width: 3; }
.frame .bar { fill: #d0a000; }
.light { fill: #fff; }
.port circle { fill: #787878; stroke: #fff; stroke-width: 2; }
.edge { fill: none; stroke: #6e6e6e; stroke-width: 3; }
.edge-red { stroke: #f00; }
.tip-red { fill: #f00; }
.tip { fill: #6e6e6e; }
.dashed { stroke-dasharray: 11 11; }

.drawer { position: absolute; top: 0; width: 65px; height: 66px; background: #002e5c; color: #fff; }
.drawer svg { width: 22px; height: 22px; margin: 0 auto 2px; }
.drawer-left { left: 0; border-radius: 0 10px 10px 0; }
.drawer-right { right: 0; border-radius: 10px 0 0 10px; }

.inspector { flex: none; width: 543px; border-left: 3px solid #002e5c; background: #d8dcf2; }
.tabs { display: flex; height: 66px; background: #002e5c; }
.tab { flex: 1 1 auto; padding: 2px 0 0; color: #fff; }
.tab-active { background: #d8dcf2; color: #002349; }
.repos { padding: 16px 51px 0 13px; }
.repos li { display: flex; align-items: center; height: 33px; overflow: hidden; white-space: nowrap; }
.host { width: 24px; height: 24px; margin: 3px 20px 0 0; color: #1e1e1e; }
.repos a { color: #0d6efd; flex: none; }
.eject { width: 15px; height: 14px; margin-left: 17px; color: #000; }
.add-repo { width: calc(100% - 19px); margin: 21px 9px 0 10px; height: 51px; }

/* settings dialog */
.backdrop {
  position: fixed;
  inset: 0;
  display: flex;
  justify-content: center;
  align-items: flex-start;
  padding: 592px 0 0 26px;
  background: rgba(0, 0, 0, .5);
}
.dialog {
  position: relative;
  width: 1090px;
  border: 1px solid #5f6469;
  border-radius: 10px;
  background: #f0f8ff;
  overflow: hidden;
}
.dialog-head {
  display: flex;
  justify-content: space-between;
  align-items: center;
  height: 69px;
  padding: 2px 21px 0 20px;
  background: #002349;
  color: #fff;
}
.dialog-head h1 { margin: 0; font-size: 25px; font-weight: 600; }
.close svg { width: 22px; height: 22px; color: #8593a6; margin-top: -2px; }
.dialog-tabs { display: grid; grid-template-columns: repeat(3, 1fr); }
.dialog-tab { height: 54px; padding-top: 2px; background: #002f5f; color: #fff; }
.dialog-tab-active { background: #f0f8ff; color: #002f5f; }
.dialog-body {
  display: grid;
  grid-template-columns: 1fr 1fr;
  align-content: start;
  gap: 6px 33px;
  min-height: 650px;
  padding: 42px 34px 0 28px;
}
.option { display: flex; height: 51px; }
.option label {
  flex: 1;
  padding: 0 16px;
  border: 1px solid #ced4da;
  border-radius: 6px 0 0 6px;
  background: #e9ecef;
  line-height: 51px;
}
.option input {
  appearance: none;
  display: grid;
  place-items: center;
  width: 49px;
  height: 51px;
  padding-bottom: 7px;
  border-radius: 5px;
  background: #6c757d;
}
.option input::before {
  content: "";
  width: 20px;
  height: 20px;
  border: 2px solid #fff;
  border-radius: 50%;
}
.option input:checked::before { background: radial-gradient(circle, #fff 4px, transparent 5px); }
.option-wide { grid-column: 1 / -1; }
.option-wide label { flex: none; width: 118px; border-radius: 6px; white-space: nowrap; }
.option select {
  flex: 1;
  appearance: none;
  padding: 1px 22px 0 21px;
  border: 1px solid #ced4da;
  border-left: 0;
  border-radius: 0 6px 6px 0;
  background: #fff url("data:image/svg+xml,%3Csvg xmlns='http://www.w3.org/2000/svg' width='13' height='9'%3E%3Cpath d='M1 1.500 6.500 7 12 1.500' fill='none' stroke='%23212529' stroke-width='1.800'/%3E%3C/svg%3E") no-repeat right 5px center;
}
.dialog-foot {
  display: flex;
  gap: 11px;
  padding: 9px 26px 10px 19px;
  border-top: 2px solid #dee2e6;
}
.btn { height: 52px; border-radius: 5px; color: #fff; }
.btn-danger { width: 179px; margin-right: auto; background: #dc3545; }
.btn-grey { width: 103px; background: #6c757d; }
.btn-navy { width: 66px; background: #002f5f; }
.grip { position: absolute; right: 1px; bottom: 1px; width: 12px; height: 12px; }
```
